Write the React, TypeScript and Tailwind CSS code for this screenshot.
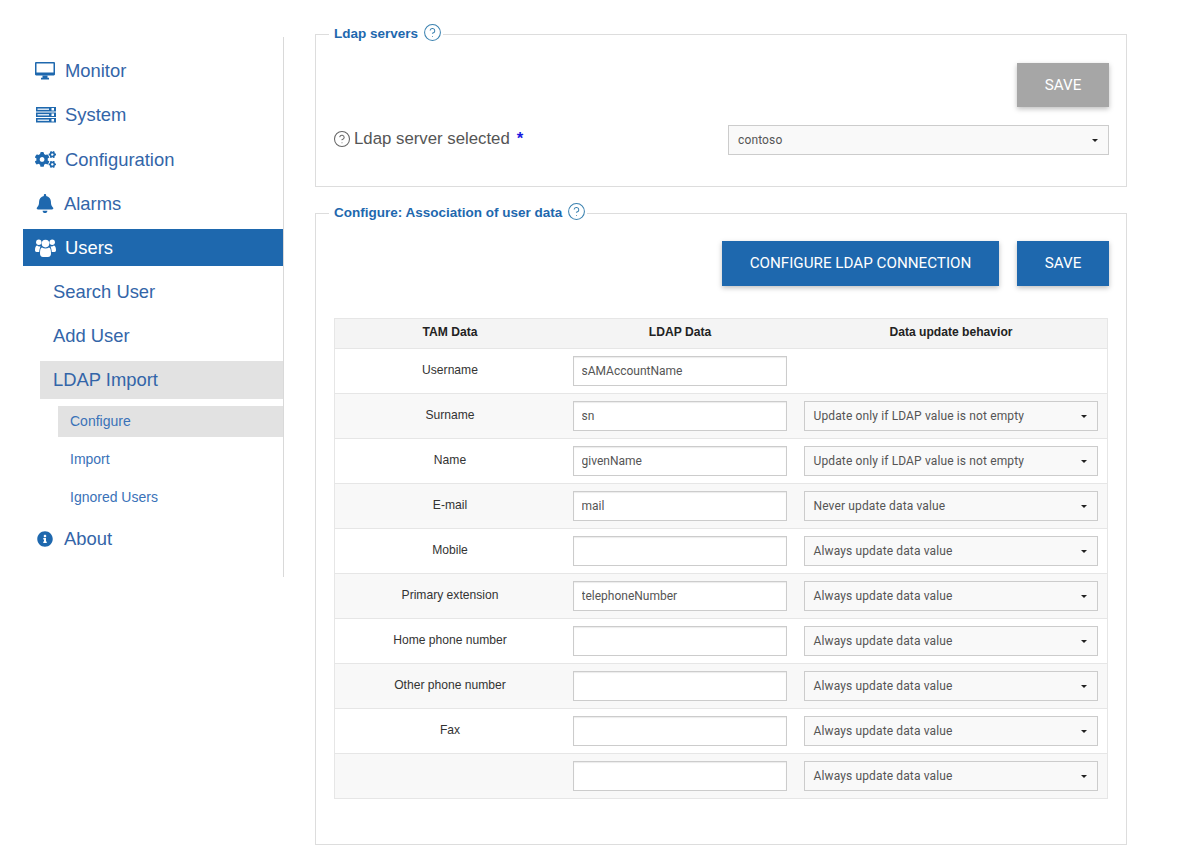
import { CircleHelp } from "lucide-react";
import { FaBell, FaCogs, FaInfoCircle } from "react-icons/fa";

const rows = [
  { label: "Username", value: "sAMAccountName", behavior: "" },
  { label: "Surname", value: "sn", behavior: "Update only if LDAP value is not empty" },
  { label: "Name", value: "givenName", behavior: "Update only if LDAP value is not empty" },
  { label: "E-mail", value: "mail", behavior: "Never update data value" },
  { label: "Mobile", value: "", behavior: "Always update data value" },
  { label: "Primary extension", value: "telephoneNumber", behavior: "Always update data value" },
  { label: "Home phone number", value: "", behavior: "Always update data value" },
  { label: "Other phone number", value: "", behavior: "Always update data value" },
  { label: "Fax", value: "", behavior: "Always update data value" },
  { label: "", value: "", behavior: "Always update data value" },
];

function MonitorIcon() {
  return (
    <svg viewBox="0 0 20 18" className="h-[18px] w-[20px] text-[#1e68ae]" fill="currentColor">
      <path fillRule="evenodd" d="M1.2 0h17.6C19.5 0 20 .5 20 1.2v11.1c0 .7-.5 1.2-1.2 1.2H1.2C.5 13.500 0 13 0 12.300V1.200C0 .5.500 0 1.200 0zM1.500 1.500v9h17v-9z" />
      <path d="M7.500 13.500h5v2.300h1.500V17.500H6v-1.700h1.500z" />
    </svg>
  );
}

function ServerIcon() {
  return (
    <svg viewBox="0 0 20 16" className="h-[16px] w-[20px] text-[#1e68ae]" fill="currentColor">
      {[0, 5.500, 11].map((y) => (
        <g key={y}>
          <rect x="0" y={y} width="20" height="4.500" />
          <rect x="1.500" y={y + 1.500} width="11.500" height="1.500" fill="#d5e3f1" />
          <rect x="15.500" y={y + 1} width="2.500" height="2.500" fill="#fff" />
        </g>
      ))}
    </svg>
  );
}

function UsersIcon() {
  return (
    <svg viewBox="0 0 21 18" className="h-[18px] w-[21px] text-white" fill="currentColor">
      <circle cx="3.800" cy="3.200" r="2.700" />
      <circle cx="17.200" cy="3.200" r="2.700" />
      <circle cx="10.500" cy="4.600" r="3.800" />
      <path d="M0 11c0-3 1-4.500 2.200-4.500.8.800 2 1.100 3.300.8-.5 1.500-1.100 3-1.300 5.700H1.500C.5 13 0 12.300 0 11z" />
      <path d="M21 11c0-3-1-4.500-2.200-4.500-.8.800-2 1.100-3.300.8.500 1.500 1.100 3 1.300 5.700h2.700c1 0 1.500-.7 1.500-2z" />
      <path d="M7 8.400c2 1.300 5 1.300 7 0 1.500.3 2 2.600 2 6.100 0 2-1.200 3.500-3 3.500H8c-1.800 0-3-1.500-3-3.500 0-3.500.5-5.800 2-6.100z" />
    </svg>
  );
}

function Select({ value, className }: { value: string; className: string }) {
  return (
    <div className={`flex items-center justify-between border border-[#ccc] bg-[#f9f9f9] pl-[9px] pr-[10px] font-['Roboto',sans-serif] text-xs tracking-[0.13px] text-[#555] ${className}`}>
      <span>{value}</span>
      <span className="h-0 w-0 border-x-[3px] border-t-[3px] border-x-transparent border-t-[#222]" />
    </div>
  );
}

function Legend({ title }: { title: string }) {
  return (
    <legend className="ml-[13px] flex h-[20px] items-center gap-[5px] pr-[1px] pl-[5px] text-[13.5px] leading-[20px] font-bold text-[#1e68ae]">
      {title}
      <CircleHelp className="h-[19px] w-[19px] -translate-y-[2px] text-[#3b82b0]" strokeWidth={1.3} />
    </legend>
  );
}

export default function App() {
  return (
    <div className="flex h-[859px] w-[1189px] overflow-hidden bg-white font-['Liberation_Sans',Arial,sans-serif]">
      {/* Sidebar */}
      <aside className="mt-[37px] ml-[23px] h-[540px] w-[261px] border-r border-[#d9d9d9] text-[18.4px] leading-[37px] text-[#3365a8]">
        <a className="mt-[15px] flex h-[37px] items-center gap-[10px] pl-[12px]"><MonitorIcon />Monitor</a>
        <a className="mt-[7px] flex h-[37px] items-center gap-[9px] pl-[13px]"><ServerIcon />System</a>
        <a className="mt-[8px] flex h-[37px] items-center gap-[9px] pl-[12px]"><FaCogs className="h-[21px] w-[21px] text-[#1e68ae]" />Configuration</a>
        <a className="mt-[7px] flex h-[37px] items-center gap-[10px] pl-[13px]"><FaBell className="h-[19px] w-[18px] text-[#1e68ae]" />Alarms</a>
        <a className="mt-[7px] flex h-[37px] items-center gap-[9px] bg-[#1e68ae] pl-[12px] text-white"><UsersIcon />Users</a>
        <a className="mt-[7px] block h-[37px] pl-[30px]">Search User</a>
        <a className="mt-[7px] block h-[37px] pl-[30px]">Add User</a>
        <a className="mt-[7px] ml-[17px] block h-[38px] bg-[#e2e2e2] pl-[13px]">LDAP Import</a>
        <div className="text-sm leading-[31px] text-[#3a72b8]">
          <a className="mt-[7px] ml-[35px] block h-[31px] bg-[#e2e2e2] pl-[12px]">Configure</a>
          <a className="mt-[7px] ml-[35px] block h-[31px] pl-[12px]">Import</a>
          <a className="mt-[7px] ml-[35px] block h-[31px] pl-[12px]">Ignored Users</a>
        </div>
        <a className="mt-[7px] flex h-[37px] items-center gap-[11px] pl-[14px]"><FaInfoCircle className="h-[16px] w-[16px] text-[#1e68ae]" />About</a>
      </aside>

      {/* Main */}
      <main className="ml-[31px] w-[812px] pt-[24px]">
        <fieldset className="h-[163px] border border-[#ddd]">
          <Legend title="Ldap servers" />
          <div className="flex justify-end pt-[19px] pr-[17px]">
            <button className="h-[44px] w-[92px] bg-[#a6a6a6] font-['Roboto',sans-serif] text-[15.2px] text-white shadow-[0_2px_5px_rgba(0,0,0,0.25)]">SAVE</button>
          </div>
          <div className="mt-[18px] flex items-center justify-between pr-[17px] pl-[18px]">
            <div className="-mt-[2px] flex items-center text-[16.8px] text-[#555]">
              <CircleHelp className="mr-[3px] -ml-[1px] h-[18px] w-[18px] text-[#666]" strokeWidth={1.4} />
              Ldap server selected
              <span className="ml-[7px] font-bold text-[#1a1ae0]">*</span>
            </div>
            <Select value="contoso" className="h-[30px] w-[381px]" />
          </div>
        </fieldset>

        <fieldset className="mt-[16px] h-[642px] border border-[#ddd]">
          <Legend title="Configure: Association of user data" />
          <div className="flex justify-end gap-[18px] pt-[18px] pr-[17px]">
            <button className="h-[45px] w-[277px] bg-[#1e68ae] font-['Roboto',sans-serif] text-[15.2px] text-white shadow-[0_2px_5px_rgba(0,0,0,0.25)]">CONFIGURE LDAP CONNECTION</button>
            <button className="h-[45px] w-[92px] bg-[#1e68ae] font-['Roboto',sans-serif] text-[15.2px] text-white shadow-[0_2px_5px_rgba(0,0,0,0.25)]">SAVE</button>
          </div>

          <div className="mt-[32px] ml-[18px] w-[774px] border border-[#e6e6e6] text-[12.1px] text-[#333]">
            <div className="grid h-[29px] grid-cols-[230px_230px_1fr] items-center bg-[#f4f4f4] pb-[2px] text-center font-bold text-[#222]">
              <span>TAM Data</span>
              <span>LDAP Data</span>
              <span>Data update behavior</span>
            </div>
            {rows.map((row, i) => (
              <div key={row.label + i} className={`grid h-[45px] grid-cols-[230px_229px_1fr] items-center border-t border-[#e6e6e6] ${i % 2 === 0 ? "bg-white" : "bg-[#f8f8f8]"}`}>
                <span className="pb-[2px] text-center">{row.label}</span>
                <div className="flex justify-center">
                  <input
                    readOnly
                    value={row.value}
                    className="h-[30px] w-[214px] border border-[#ccc] bg-white px-2 font-['Roboto',sans-serif] text-xs text-[#555] shadow-[inset_0_1px_1px_rgba(0,0,0,0.08)] outline-none"
                  />
                </div>
                <div className="flex justify-center">
                  {row.behavior && <Select value={row.behavior} className="h-[30px] w-[294px]" />}
                </div>
              </div>
            ))}
          </div>
        </fieldset>
      </main>
    </div>
  );
}
